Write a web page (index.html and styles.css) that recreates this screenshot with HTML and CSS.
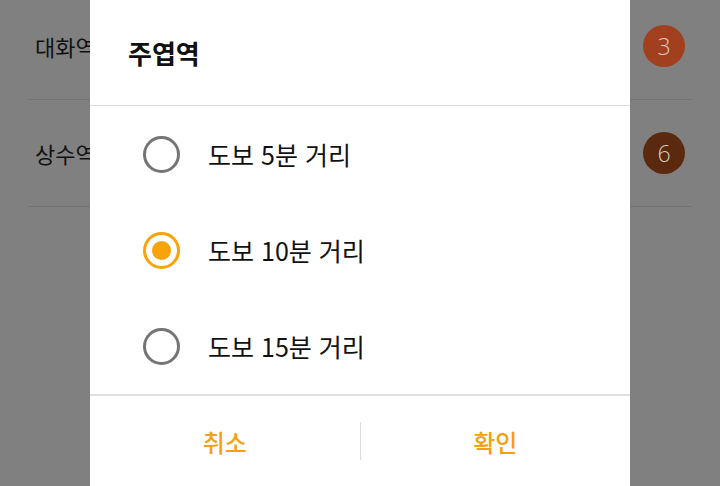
FILE: index.html
```html
<!DOCTYPE html>
<html lang="ko">
<head>
<meta charset="utf-8">
<link rel="stylesheet" href="styles.css">
</head>
<body>
<div class="screen">
  <div class="list">
    <div class="row"><span class="name">대화역</span><span class="badge b3">3</span></div>
    <div class="row"><span class="name">상수역</span><span class="badge b6">6</span></div>
  </div>
  <div class="dialog">
    <div class="title">주엽역</div>
    <div class="options">
      <div class="option"><span class="radio"></span><span class="label">도보 5분 거리</span></div>
      <div class="option"><span class="radio checked"></span><span class="label">도보 10분 거리</span></div>
      <div class="option"><span class="radio"></span><span class="label">도보 15분 거리</span></div>
    </div>
    <div class="actions">
      <div class="btn">취소</div>
      <div class="sep"></div>
      <div class="btn">확인</div>
    </div>
  </div>
</div>
</body>
</html>
```
FILE: styles.css
```css
* { box-sizing: border-box; }
html, body { margin: 0; padding: 0; }
body {
  width: 720px; height: 486px; overflow: hidden;
  font-family: "Noto Sans CJK KR", "Noto Sans", sans-serif;
  background: #808080;
}
.screen { position: relative; width: 720px; height: 486px; overflow: hidden; }
.list { margin-top: -7px; padding: 0 28px; }
.row {
  height: 107px;
  border-bottom: 1px solid #737373;
  display: flex; align-items: center; justify-content: space-between;
  padding: 0 6px 0 7px;
}
.name { font-size: 22px; color: #111; }
.badge {
  width: 42px; height: 42px; border-radius: 50%;
  display: flex; align-items: center; justify-content: center;
  font-family: "Open Sans", sans-serif; font-weight: 300; font-size: 23px; color: #d9c9c0;
  margin-right: 1px;
}
.b3 { background: #a23f1e; }
.b6 { background: #5a290e; }
.dialog {
  position: absolute; left: 90px; top: 0; width: 540px; height: 486px;
  background: #fff; display: flex; flex-direction: column;
}
.title {
  height: 106px; border-bottom: 1px solid #dcdcdc;
  display: flex; align-items: center; padding-left: 38px;
  font-size: 26px; font-weight: 700; color: #111;
}
.options { display: flex; flex-direction: column; height: 290px; border-bottom: 2px solid #e0e0e0; }
.option { flex: 1; display: flex; align-items: center; padding-left: 53px; }
.radio {
  width: 37px; height: 37px; border-radius: 50%;
  border: 3px solid #757575; display: flex; align-items: center; justify-content: center;
}
.radio.checked { border-color: #f9a30b; }
.radio.checked::after {
  content: ""; width: 19px; height: 19px; border-radius: 50%; background: #f9a30b;
}
.label { margin-left: 28px; font-size: 25px; color: #111; }
.actions { flex: 1; display: flex; align-items: center; }
.btn { flex: 1; text-align: center; font-size: 24px; font-weight: 500; color: #f5a00f; }
.sep { width: 1px; height: 38px; background: #dcdcdc; }
```
